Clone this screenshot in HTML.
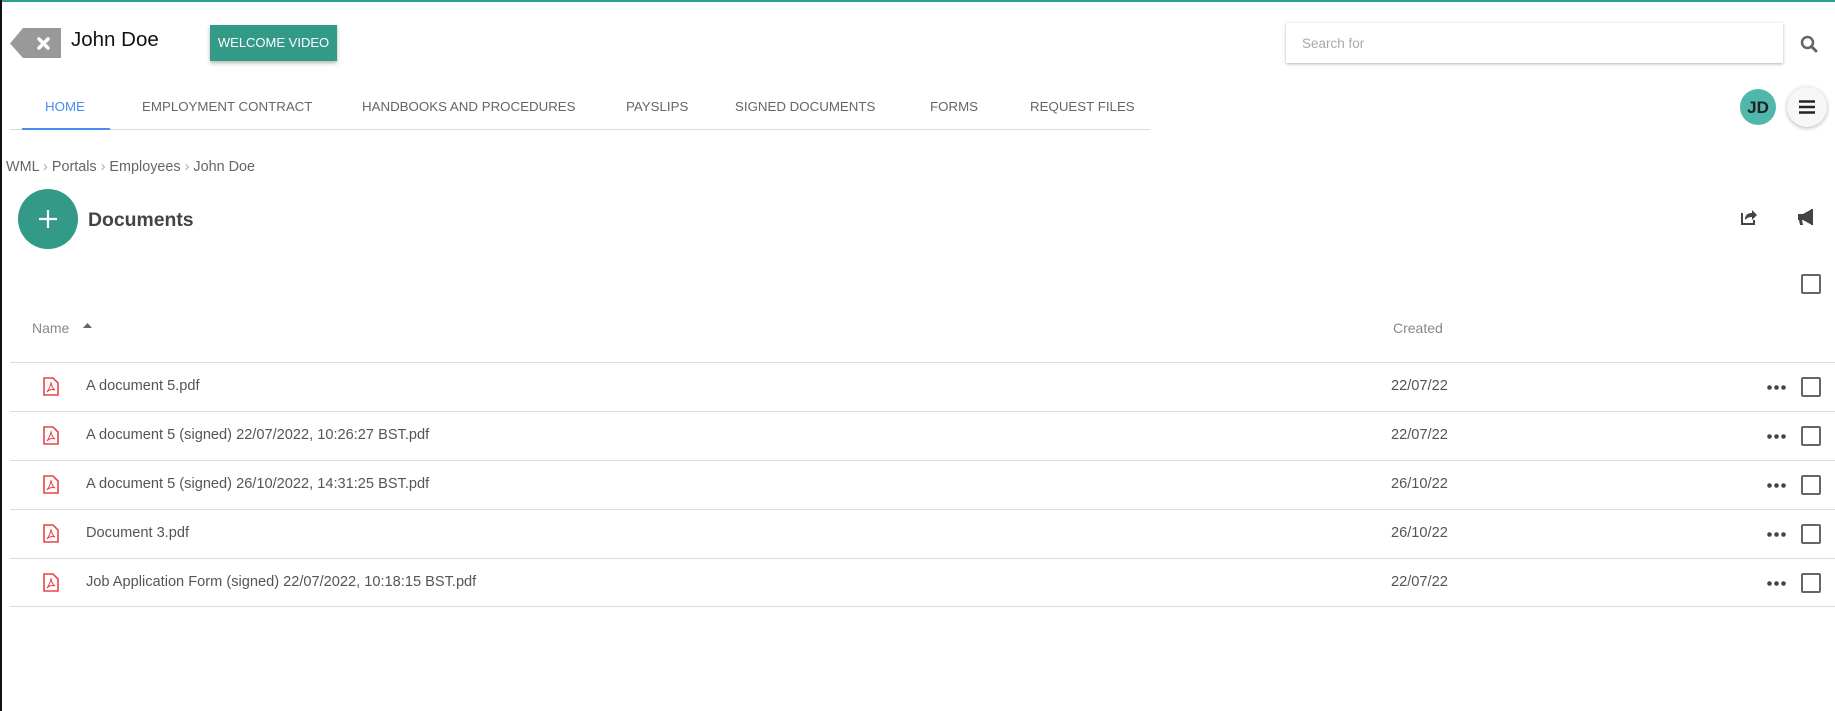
<!DOCTYPE html>
<html><head><meta charset="utf-8"><style>
*{margin:0;padding:0;box-sizing:border-box}
body{width:1835px;height:711px;position:relative;background:#fff;font-family:"Liberation Sans",sans-serif;color:#555;overflow:hidden}
.a{position:absolute;white-space:nowrap}
.tab{position:absolute;top:99px;font-size:13.3px;color:#666}
.row{position:absolute;left:10px;right:0;height:49px;border-top:1px solid #ddd}
.row .t{position:absolute;left:76px;top:15px;font-size:14.6px;color:#555}
.row .d{position:absolute;left:1381px;top:15px;font-size:14.6px;color:#555}
.row .dots{position:absolute;left:1757px;top:22px;width:20px;height:5px}
.cb{position:absolute;width:20px;height:20px;border:2px solid #666;border-radius:2px}
.row .cb{left:1791px;top:14px}
.row svg.p{position:absolute;left:33px;top:14px}
</style></head><body>
<div class="a" style="left:0;top:0;width:1835px;height:2px;background:#2f9e8a"></div>
<div class="a" style="left:0;top:0;width:2px;height:711px;background:#111"></div>
<svg class="a" style="left:10px;top:28px" width="52" height="31"><path d="M0 15.5 L13 0 H51 V30 H13 Z" fill="#999"/><path d="M29 11 L38 20 M38 11 L29 20" stroke="#fff" stroke-width="3.5" stroke-linecap="round"/></svg>
<div class="a" style="left:71px;top:28px;font-size:20.5px;color:#111">John Doe</div>
<div class="a" style="left:210px;top:25px;width:127px;height:36px;background:#339a88;color:#fff;font-size:13px;line-height:36px;text-align:center;box-shadow:0 2px 4px rgba(0,0,0,.3)">WELCOME VIDEO</div>
<div class="a" style="left:1286px;top:23px;width:497px;height:40px;box-shadow:0 1px 3px rgba(0,0,0,.3);background:#fff"></div>
<div class="a" style="left:1302px;top:36px;font-size:13.5px;color:#aaa">Search for</div>
<svg class="a" style="left:1800px;top:35px" width="18" height="18"><circle cx="7.5" cy="7.5" r="5.5" stroke="#666" stroke-width="2.5" fill="none"/><path d="M11.5 11.5 L16 16" stroke="#666" stroke-width="3" stroke-linecap="round"/></svg>
<div class="tab" style="left:45px;color:#4a8cf0">HOME</div>
<div class="tab" style="left:142px">EMPLOYMENT CONTRACT</div>
<div class="tab" style="left:362px">HANDBOOKS AND PROCEDURES</div>
<div class="tab" style="left:626px">PAYSLIPS</div>
<div class="tab" style="left:735px">SIGNED DOCUMENTS</div>
<div class="tab" style="left:930px">FORMS</div>
<div class="tab" style="left:1030px">REQUEST FILES</div>
<div class="a" style="left:10px;top:129px;width:1140px;height:1px;background:#ddd"></div>
<div class="a" style="left:22px;top:128px;width:88px;height:2px;background:#4a8cf0"></div>
<div class="a" style="left:1740px;top:89px;width:36px;height:36px;border-radius:50%;background:#4fb7ab;color:#222;font-weight:bold;font-size:17px;line-height:38px;text-align:center">JD</div>
<div class="a" style="left:1787px;top:87px;width:40px;height:40px;border-radius:50%;background:#f7f7f7;box-shadow:0 1px 4px rgba(0,0,0,.3)"></div>
<svg class="a" style="left:1798px;top:99px" width="18" height="16"><path d="M1 2.5H17M1 8H17M1 13.5H17" stroke="#222" stroke-width="2.6"/></svg>
<div class="a" style="left:6px;top:159px;font-size:14.4px;color:#666">WML <span style="color:#aaa">›</span> Portals <span style="color:#aaa">›</span> Employees <span style="color:#aaa">›</span> John Doe</div>
<div class="a" style="left:18px;top:189px;width:60px;height:60px;border-radius:50%;background:#339a88"></div>
<svg class="a" style="left:38px;top:209px" width="20" height="20"><path d="M10 1V19M1 10H19" stroke="#fff" stroke-width="2.2"/></svg>
<div class="a" style="left:88px;top:209px;font-size:19.4px;font-weight:bold;color:#444">Documents</div>
<svg class="a" style="left:1740px;top:208px" width="18" height="18"><path d="M2 5V16H14V12" stroke="#444" stroke-width="2" fill="none"/><path d="M5 12 C5 6 9 5 12 5 V2 L17 7 L12 12 V9 C9 9 7 10 5 12Z" fill="#444"/></svg>
<svg class="a" style="left:1797px;top:208px" width="20" height="18"><path d="M1 6H6L15 1V17L6 12H5L6 17H3L2 12H1Z" fill="#444"/><path d="M15 1V17" stroke="#444" stroke-width="2"/></svg>
<div class="cb" style="left:1801px;top:274px"></div>
<div class="a" style="left:32px;top:320px;font-size:14px;color:#888">Name</div>
<svg class="a" style="left:83px;top:323px" width="9" height="6"><path d="M0 5L4.5 0L9 5Z" fill="#666"/></svg>
<div class="a" style="left:1393px;top:320px;font-size:14px;color:#888">Created</div>
<div class="row" style="top:362px"><svg class="p" width="16" height="19"><path d="M1 1H10L15 6V18H1Z" stroke="#e8454a" stroke-width="1.6" fill="none"/><path d="M4 15 C6 12 8 8 8 5 C8 8 10 12 12 13 C9 12 6 13 4 15Z" stroke="#e8454a" stroke-width="1" fill="none"/></svg><div class="t">A document 5.pdf</div><div class="d">22/07/22</div><svg class="dots" width="20" height="5"><circle cx="2.5" cy="2.5" r="2.3" fill="#444"/><circle cx="9.5" cy="2.5" r="2.3" fill="#444"/><circle cx="16.5" cy="2.5" r="2.3" fill="#444"/></svg><div class="cb"></div></div>
<div class="row" style="top:411px"><svg class="p" width="16" height="19"><path d="M1 1H10L15 6V18H1Z" stroke="#e8454a" stroke-width="1.6" fill="none"/><path d="M4 15 C6 12 8 8 8 5 C8 8 10 12 12 13 C9 12 6 13 4 15Z" stroke="#e8454a" stroke-width="1" fill="none"/></svg><div class="t">A document 5 (signed) 22/07/2022, 10:26:27 BST.pdf</div><div class="d">22/07/22</div><svg class="dots" width="20" height="5"><circle cx="2.5" cy="2.5" r="2.3" fill="#444"/><circle cx="9.5" cy="2.5" r="2.3" fill="#444"/><circle cx="16.5" cy="2.5" r="2.3" fill="#444"/></svg><div class="cb"></div></div>
<div class="row" style="top:460px"><svg class="p" width="16" height="19"><path d="M1 1H10L15 6V18H1Z" stroke="#e8454a" stroke-width="1.6" fill="none"/><path d="M4 15 C6 12 8 8 8 5 C8 8 10 12 12 13 C9 12 6 13 4 15Z" stroke="#e8454a" stroke-width="1" fill="none"/></svg><div class="t">A document 5 (signed) 26/10/2022, 14:31:25 BST.pdf</div><div class="d">26/10/22</div><svg class="dots" width="20" height="5"><circle cx="2.5" cy="2.5" r="2.3" fill="#444"/><circle cx="9.5" cy="2.5" r="2.3" fill="#444"/><circle cx="16.5" cy="2.5" r="2.3" fill="#444"/></svg><div class="cb"></div></div>
<div class="row" style="top:509px"><svg class="p" width="16" height="19"><path d="M1 1H10L15 6V18H1Z" stroke="#e8454a" stroke-width="1.6" fill="none"/><path d="M4 15 C6 12 8 8 8 5 C8 8 10 12 12 13 C9 12 6 13 4 15Z" stroke="#e8454a" stroke-width="1" fill="none"/></svg><div class="t">Document 3.pdf</div><div class="d">26/10/22</div><svg class="dots" width="20" height="5"><circle cx="2.5" cy="2.5" r="2.3" fill="#444"/><circle cx="9.5" cy="2.5" r="2.3" fill="#444"/><circle cx="16.5" cy="2.5" r="2.3" fill="#444"/></svg><div class="cb"></div></div>
<div class="row" style="top:558px;border-bottom:1px solid #ddd"><svg class="p" width="16" height="19"><path d="M1 1H10L15 6V18H1Z" stroke="#e8454a" stroke-width="1.6" fill="none"/><path d="M4 15 C6 12 8 8 8 5 C8 8 10 12 12 13 C9 12 6 13 4 15Z" stroke="#e8454a" stroke-width="1" fill="none"/></svg><div class="t">Job Application Form (signed) 22/07/2022, 10:18:15 BST.pdf</div><div class="d">22/07/22</div><svg class="dots" width="20" height="5"><circle cx="2.5" cy="2.5" r="2.3" fill="#444"/><circle cx="9.5" cy="2.5" r="2.3" fill="#444"/><circle cx="16.5" cy="2.5" r="2.3" fill="#444"/></svg><div class="cb"></div></div>
</body></html>
